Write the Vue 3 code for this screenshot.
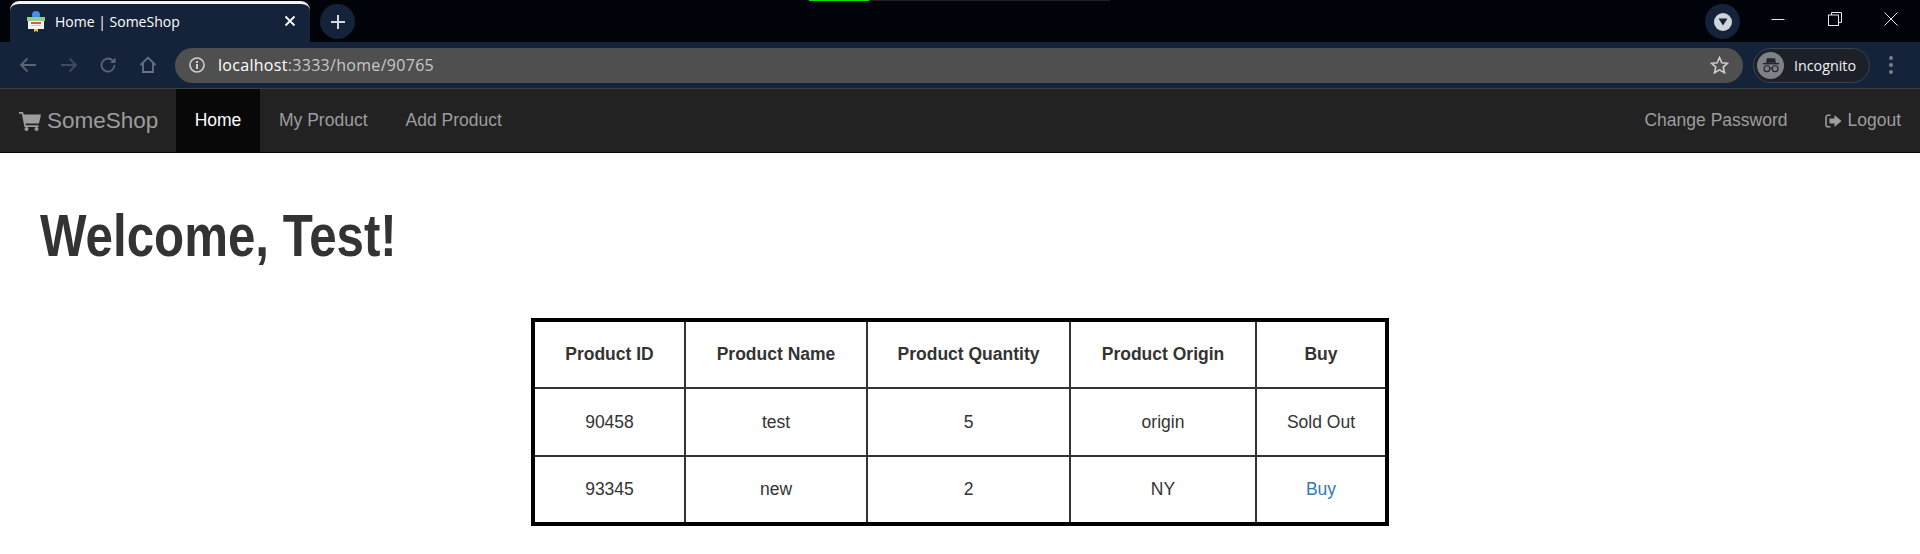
<script setup>
const rows = [
  { id: '90458', name: 'test', qty: '5', origin: 'origin', buy: 'Sold Out', link: false },
  { id: '93345', name: 'new', qty: '2', origin: 'NY', buy: 'Buy', link: true },
]
const heads = ['Product ID', 'Product Name', 'Product Quantity', 'Product Origin', 'Buy']
</script>

<template>
  <div class="page">
    <div class="tabstrip">
      <div class="tab">
        <svg class="favicon" width="22" height="22" viewBox="0 0 22 22">
          <circle cx="11" cy="5" r="4" fill="#4a90e2" />
          <rect x="2" y="7" width="18" height="4" fill="#8ed08a" />
          <rect x="3" y="11" width="16" height="8" fill="#f4f4f0" />
          <rect x="6" y="12" width="10" height="2" fill="#e2574c" />
          <rect x="6" y="15" width="10" height="1" fill="#c9c9c9" />
          <path d="M9 19h4v3l-2-1-2 1z" fill="#f5b945" />
        </svg>
        <span class="tabtitle">Home | SomeShop</span>
        <svg class="tabclose" width="12" height="12" viewBox="0 0 12 12">
          <path d="M1.5 1.5l9 9M10.500 1.500l-9 9" stroke="#fff" stroke-width="1.800" />
        </svg>
      </div>
      <div class="newtab">
        <svg width="16" height="16" viewBox="0 0 16 16"><path d="M8 1v14M1 8h14" stroke="#d5d8dd" stroke-width="2" /></svg>
      </div>
      <div class="progress"><span class="progressfill"></span></div>
      <div class="spacer"></div>
      <div class="media"><span class="mediadot"><svg width="10" height="8" viewBox="0 0 10 8"><path d="M0.500 0.500h9L5 7.500z" fill="#14233a" /></svg></span></div>
      <div class="wincontrols">
        <svg width="14" height="14" viewBox="0 0 14 14"><path d="M0.500 7.500h13" stroke="#e8e8e8" /></svg>
        <svg width="14" height="14" viewBox="0 0 14 14" fill="none" stroke="#e8e8e8"><rect x="0.500" y="3" width="10" height="10.500" /><path d="M3.500 3V0.500h10V10.500H10.500" /></svg>
        <svg width="14" height="14" viewBox="0 0 14 14"><path d="M0.500 0.500l13 13M13.500 0.500l-13 13" stroke="#e8e8e8" /></svg>
      </div>
    </div>

    <div class="toolbar">
      <svg class="navicon back" width="18" height="16" viewBox="0 0 18 16" fill="none" stroke="#5a6472" stroke-width="1.800"><path d="M17 8H2M8.500 1.500L2 8l6.500 6.500" /></svg>
      <svg class="navicon" width="18" height="16" viewBox="0 0 18 16" fill="none" stroke="#3f4b5d" stroke-width="1.800"><path d="M1 8h15M9.500 1.500L16 8l-6.500 6.500" /></svg>
      <svg class="navicon reload" width="18" height="18" viewBox="0 0 18 18" fill="none" stroke="#5a6472" stroke-width="1.800"><path d="M15.500 9a6.500 6.500 0 1 1-2-4.700L16 6.500" /><path d="M16.500 1.500v5.500h-5.500" fill="#5a6472" stroke="none" /></svg>
      <svg class="navicon home" width="18" height="18" viewBox="0 0 18 18" fill="none" stroke="#687282" stroke-width="1.800"><path d="M1.500 9L9 1.700 16.500 9M4 7.500V16h10V7.500" /></svg>
      <div class="omnibox">
        <svg width="16" height="16" viewBox="0 0 16 16"><circle cx="8" cy="8" r="7" fill="none" stroke="#d0d0d0" stroke-width="1.600" /><rect x="7" y="7" width="2" height="5" fill="#d0d0d0" /><rect x="7" y="4" width="2" height="2" fill="#d0d0d0" /></svg>
        <span class="url"><span class="host">localhost</span>:3333/home/90765</span>
        <svg class="star" width="19" height="18" viewBox="0 0 19 18"><path d="M9.500 1.500l2.300 5.200 5.700.6-4.300 3.800 1.300 5.600-5-2.900-5 2.900 1.300-5.600L1.500 7.300l5.700-.6z" fill="none" stroke="#d0d0d0" stroke-width="1.600" /></svg>
      </div>
      <div class="profile">
        <span class="avatar">
          <svg width="22" height="18" viewBox="0 0 22 18" fill="none" stroke="#23262d" stroke-width="1.300">
            <path d="M6.500 1h9l1 5h-11z" fill="#23262d" stroke="none" />
            <path d="M2 7h18" stroke-width="1.600" />
            <circle cx="6.500" cy="12.500" r="3.200" />
            <circle cx="15.500" cy="12.500" r="3.200" />
            <path d="M9.700 12h2.600" />
          </svg>
        </span>
        <span class="proname">Incognito</span>
      </div>
      <div class="dots"><i></i><i></i><i></i></div>
    </div>

    <nav class="navbar">
      <a class="brand">
        <svg width="22" height="20" viewBox="0 0 22 20" fill="#9d9d9d"><path d="M0 1h4l.8 2.500H22l-2 9H6.500l.4 1.800H19.500v1.800H5.500L2.800 2.800H0z" /><circle cx="7.500" cy="18" r="2" /><circle cx="17.500" cy="18" r="2" /></svg>
        SomeShop
      </a>
      <a class="item active">Home</a>
      <a class="item">My Product</a>
      <a class="item">Add Product</a>
      <div class="spacer"></div>
      <a class="item">Change Password</a>
      <a class="item logout">
        <svg width="17" height="14" viewBox="0 0 17 14"><path d="M5.500 1.200H3A2 2 0 0 0 1 3.200v7.600a2 2 0 0 0 2 2h2.500" fill="none" stroke="#9d9d9d" stroke-width="1.600" /><path d="M4.500 4.500h5V1l7 6-7 6V9.500h-5z" fill="#9d9d9d" /></svg>
        Logout
      </a>
    </nav>

    <main class="content">
      <h1 class="welcome">Welcome, Test!</h1>
      <table class="products">
        <colgroup>
          <col class="c1" /><col class="c2" /><col class="c3" /><col class="c4" /><col class="c5" />
        </colgroup>
        <thead>
          <tr><th v-for="h in heads" :key="h">{{ h }}</th></tr>
        </thead>
        <tbody>
          <tr v-for="r in rows" :key="r.id">
            <td>{{ r.id }}</td>
            <td>{{ r.name }}</td>
            <td>{{ r.qty }}</td>
            <td>{{ r.origin }}</td>
            <td><a v-if="r.link" class="buy">{{ r.buy }}</a><template v-else>{{ r.buy }}</template></td>
          </tr>
        </tbody>
      </table>
    </main>
  </div>
</template>

<style>
html, body { margin: 0; background: #fff; }
</style>

<style scoped>
.page { font-family: "Liberation Sans", Arial, sans-serif; height: 554px; overflow: hidden; background: #fff; }
.spacer { flex: 1; }

.tabstrip { position: relative; height: 42px; background: #00030a; display: flex; align-items: flex-start; box-sizing: border-box; }
.tab { margin: 1px 0 0 10px; width: 300px; height: 41px; box-sizing: border-box; background: #14233a; border-top: 3px solid #f2f2f2; border-radius: 9px 9px 0 0; display: flex; align-items: center; padding: 0 14px 4px 15px; color: #fff; }
.favicon { flex: none; }
.tabtitle { margin-left: 8px; font-family: "Open Sans", "Liberation Sans", sans-serif; font-size: 14px; flex: 1; }
.tabclose { flex: none; }
.newtab { margin: 4px 0 0 10px; width: 35px; height: 35px; border-radius: 50%; background: #14233a; display: flex; align-items: center; justify-content: center; }
.progress { position: absolute; left: 809px; top: 0; width: 301px; height: 1px; background: #1e2022; }
.progressfill { display: block; width: 60px; height: 1px; background: #05e30c; }
.media { margin: 4px 0 0; width: 35px; height: 35px; border-radius: 50%; background: #14233a; display: flex; align-items: center; justify-content: center; }
.mediadot { width: 18px; height: 18px; border-radius: 50%; background: #d0d3d8; display: flex; align-items: center; justify-content: center; }
.wincontrols { margin: 12px 0 0 0; width: 180px; box-sizing: border-box; padding: 0 22px 0 31px; display: flex; justify-content: space-between; }

.toolbar { height: 46px; background: #14233a; border-bottom: 1px solid #3c4043; display: flex; align-items: center; padding: 0 12px 0 19px; }
.navicon { flex: none; margin-right: 21px; }
.navicon.back { margin-right: 23px; }
.navicon.reload { margin-right: 22px; }
.navicon.home { margin-right: 18px; }
.omnibox { width: 1568px; flex: none; height: 35px; border-radius: 18px; background: #4f4f4f; display: flex; align-items: center; padding: 0 14px 0 14px; box-sizing: border-box; }
.url { margin-left: 13px; font-family: "Open Sans", "Liberation Sans", sans-serif; font-size: 16px; color: #c8c8c8; flex: 1; letter-spacing: 0.300px; }
.host { color: #fff; }
.profile { margin-left: 10px; flex: none; width: 117px; height: 35px; box-sizing: border-box; border: 1px solid #3d434d; border-radius: 18px; background: #1d2029; display: flex; align-items: center; padding-left: 3px; }
.avatar { width: 27px; height: 27px; border-radius: 50%; background: #7e8188; display: flex; align-items: center; justify-content: center; }
.avatar svg { width: 20px; height: 17px; }
.proname { margin-left: 10px; font-family: "Open Sans", "Liberation Sans", sans-serif; font-size: 14.300px; color: #f0f0f0; }
.dots { margin-left: 19px; display: flex; flex-direction: column; gap: 3px; }
.dots i { display: block; width: 4px; height: 4px; border-radius: 50%; background: #7a808a; }

.navbar { height: 63px; background: #222; border-bottom: 1px solid #080808; display: flex; align-items: stretch; color: #9d9d9d; font-size: 17.500px; }
.brand { width: 176px; padding-left: 19px; box-sizing: border-box; display: flex; align-items: center; gap: 6px; font-size: 22.500px; color: #9d9d9d; }
.item { padding: 0 19px; display: flex; align-items: center; color: #9d9d9d; }
.item.active { background: #080808; color: #fff; width: 84px; padding: 0; box-sizing: border-box; justify-content: center; }
.logout { gap: 5px; }

.content { padding: 0 40px; }
.welcome { margin: 0; height: 165px; box-sizing: border-box; padding-top: 50px; font-size: 60px; line-height: 66px; font-weight: 700; color: #333; transform: scaleX(0.821); transform-origin: left center; white-space: nowrap; }
.products { margin-left: 491px; width: 858px; table-layout: fixed; border-collapse: separate; border-spacing: 0; border: 4px solid #000; font-size: 17.500px; color: #333; text-align: center; }
.c1 { width: 151px; } .c2 { width: 182px; } .c3 { width: 203px; } .c4 { width: 186px; } .c5 { width: 128px; }
.products th, .products td { border-right: 2px solid #333; border-bottom: 2px solid #333; padding: 0; text-align: center; height: 67px; box-sizing: border-box; }
.products tr > :last-child { border-right: 0; }
.products tbody tr:last-child td { border-bottom: 0; height: 65px; }
.products thead th { height: 67px; }
.products tbody tr:first-child td { height: 68px; }
.products th { font-weight: 700; }
.buy { color: #337ab7; }
</style>
